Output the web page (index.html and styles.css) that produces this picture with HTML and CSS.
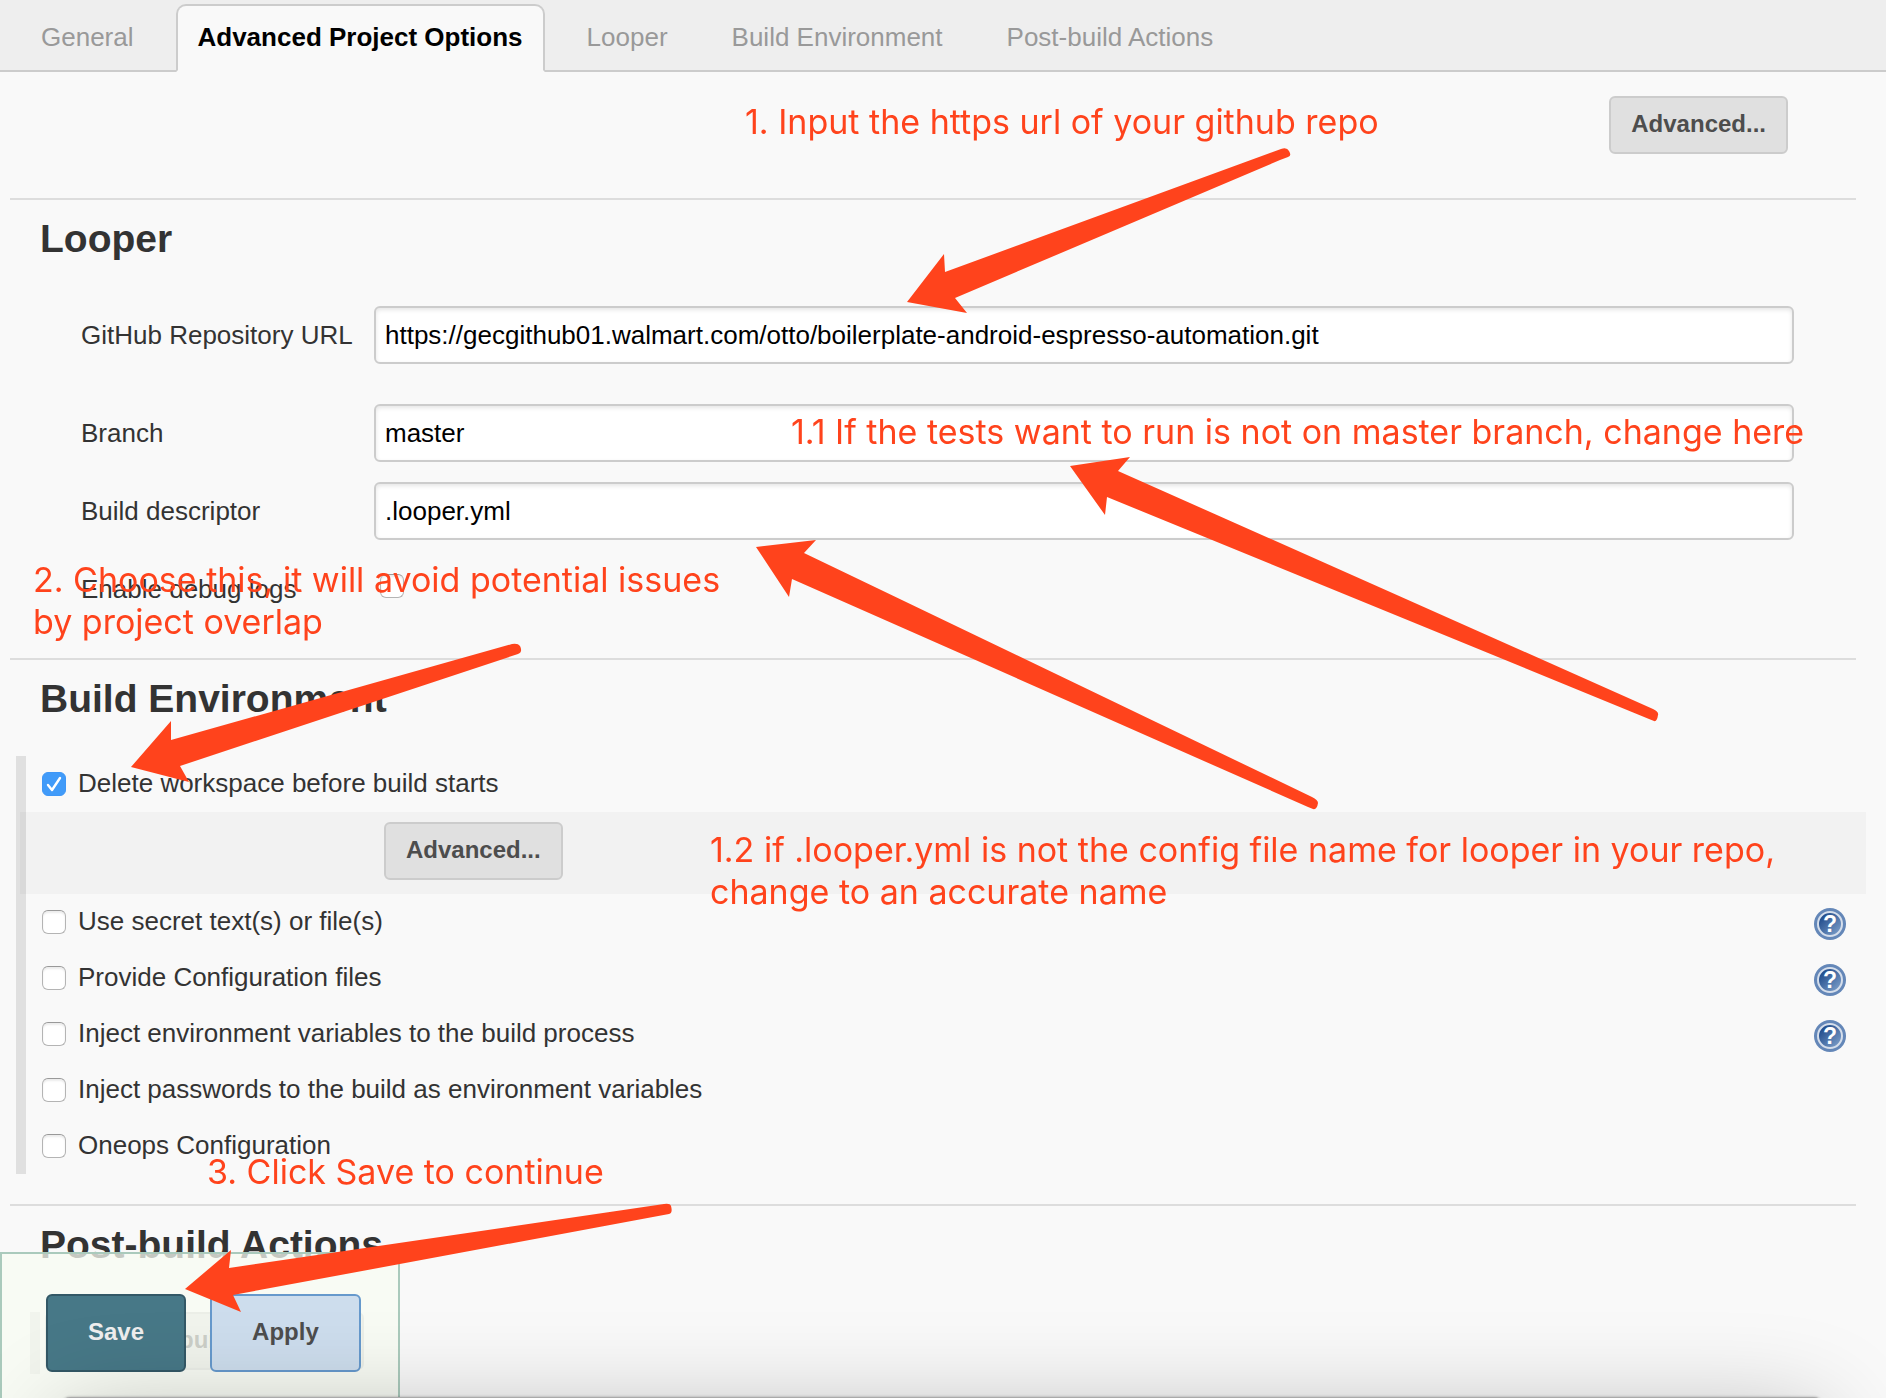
FILE: index.html
```html
<!DOCTYPE html>
<html lang="en">
<head>
<meta charset="utf-8">
<meta name="viewport" content="width=device-width, initial-scale=1">
<title>Project Configuration</title>
<link rel="stylesheet" href="styles.css">
</head>
<body>
<svg class="defs" width="0" height="0" aria-hidden="true">
  <defs>
    <linearGradient id="help-fill" x1="0" y1="0" x2="1" y2="1">
      <stop offset="0.2" stop-color="#25508f"/>
      <stop offset="1" stop-color="#88a8d0"/>
    </linearGradient>
    <symbol id="help" viewBox="0 0 32 32">
      <circle cx="16" cy="16" r="16" fill="#6487b8"/>
      <circle cx="16" cy="16" r="12" fill="url(#help-fill)" stroke="#d5deeb" stroke-width="2"/>
      <text x="16" y="24" text-anchor="middle" class="help-mark">?</text>
    </symbol>
  </defs>
</svg>
<div class="page">
  <nav class="tabs">
    <a class="tab" href="#general">General</a>
    <a class="tab tab-active" href="#advanced">Advanced Project Options</a>
    <a class="tab" href="#looper">Looper</a>
    <a class="tab" href="#environment">Build Environment</a>
    <a class="tab" href="#post-build">Post-build Actions</a>
  </nav>

  <main class="config">
    <div class="advanced-row" id="advanced">
      <button class="btn" type="button">Advanced...</button>
    </div>

    <section class="section" id="looper">
      <h2 class="heading">Looper</h2>
      <div class="form">
        <div class="field field-spaced">
          <label for="repo">GitHub Repository URL</label>
          <input class="text-input" id="repo" type="text" value="https://gecgithub01.walmart.com/otto/boilerplate-android-espresso-automation.git">
        </div>
        <div class="field">
          <label for="branch">Branch</label>
          <input class="text-input" id="branch" type="text" value="master">
        </div>
        <div class="field">
          <label for="descriptor">Build descriptor</label>
          <input class="text-input" id="descriptor" type="text" value=".looper.yml">
        </div>
        <div class="field">
          <label for="debug">Enable debug logs</label>
          <input class="check check-field" id="debug" type="checkbox">
        </div>
      </div>
    </section>

    <section class="section" id="environment">
      <h2 class="heading">Build Environment</h2>
      <ul class="options">
        <li class="option"><input class="check" id="clean" type="checkbox" checked><label for="clean">Delete workspace before build starts</label></li>
        <li class="option-detail"><button class="btn" type="button">Advanced...</button></li>
        <li class="option"><input class="check" id="secret" type="checkbox"><label for="secret">Use secret text(s) or file(s)</label><button class="help" type="button" aria-label="Help"><svg width="32" height="32"><use href="#help"/></svg></button></li>
        <li class="option"><input class="check" id="files" type="checkbox"><label for="files">Provide Configuration files</label><button class="help" type="button" aria-label="Help"><svg width="32" height="32"><use href="#help"/></svg></button></li>
        <li class="option"><input class="check" id="variables" type="checkbox"><label for="variables">Inject environment variables to the build process</label><button class="help" type="button" aria-label="Help"><svg width="32" height="32"><use href="#help"/></svg></button></li>
        <li class="option"><input class="check" id="passwords" type="checkbox"><label for="passwords">Inject passwords to the build as environment variables</label></li>
        <li class="option"><input class="check" id="oneops" type="checkbox"><label for="oneops">Oneops Configuration</label></li>
      </ul>
    </section>

    <section class="section" id="post-build">
      <h2 class="heading">Post-build Actions</h2>
      <div class="add-step">
        <button class="btn btn-menu" type="button">Add post-build action</button>
      </div>
    </section>
  </main>

  <div class="actions">
    <button class="action action-save" type="submit">Save</button>
    <button class="action action-apply" type="button">Apply</button>
  </div>
  <div class="dock-shadow"></div>

  <div class="notes">
    <svg class="arrows" width="1886" height="1398" viewBox="0 0 1886 1398" aria-hidden="true">
      <path d="M907 302L944 254L945 272L1281 149Q1287 147 1289 151Q1292 156 1288 157L1280 160L955 298L967 313Z"/>
      <path d="M131 767L171 721L171 740L512 644Q518 643 520 646Q523 652 518 654L180 766L189 782Z"/>
      <path d="M756 547L816 540L804 553L1312 797Q1318 800 1318 803Q1317 810 1313 809L1308 807L792 579L789 597Z"/>
      <path d="M1070 466L1130 457L1118 471L1653 709Q1659 712 1658 715Q1657 722 1654 721L1649 719L1107 497L1105 515Z"/>
      <path d="M185 1289L231 1250L229 1268L664 1204Q670 1203 671 1206Q673 1213 669 1214L233 1295L241 1312Z"/>
    </svg>
    <p class="note note-url">1. Input the https url of your github repo</p>
    <p class="note note-branch">1.1 If the tests want to run is not on master branch, change here</p>
    <p class="note note-file">1.2 if .looper.yml is not the config file name for looper in your repo,<br>change to an accurate name</p>
    <p class="note note-clean">2. Choose this, it will avoid potential issues<br>by project overlap</p>
    <p class="note note-save">3. Click Save to continue</p>
  </div>
</div>
</body>
</html>
```
FILE: styles.css
```css
* {
  box-sizing: border-box;
}

body {
  margin: 0;
  background: #f9f9f9;
  color: #333;
  font: 26px/30px "Liberation Sans", Arial, sans-serif;
}

button,
input {
  margin: 0;
  font-family: inherit;
}

.defs {
  position: absolute;
}

.page {
  position: relative;
  min-height: 100vh;
  overflow: hidden;
}

/* Tabs */
.tabs {
  display: flex;
  align-items: flex-end;
  gap: 20px;
  height: 72px;
  padding-left: 19px;
  background: #eee;
  box-shadow: inset 0 -2px #ccc;
}

.tab {
  height: 68px;
  padding: 16px 20px;
  border: 2px solid transparent;
  color: #999;
  text-decoration: none;
  white-space: nowrap;
}

.tab-active {
  border-color: #ccc;
  border-bottom-color: #f9f9f9;
  border-radius: 10px 10px 0 0;
  background: #f9f9f9;
  color: #000;
  font-weight: bold;
}

/* Sections */
.config {
  padding: 0 30px 0 10px;
}

.advanced-row {
  display: flex;
  justify-content: flex-end;
  padding: 24px 68px 44px 0;
}

.section {
  border-top: 2px solid #ddd;
  padding-top: 16px;
}

.heading {
  margin: 0 0 34px 30px;
  font-size: 39px;
  line-height: 46px;
}

.btn {
  height: 58px;
  padding: 0 20px 2px;
  border: 2px solid #ccc;
  border-radius: 6px;
  background: #e0e0e0;
  color: #4d4d4d;
  font-size: 24px;
  font-weight: bold;
}

.form {
  display: flex;
  flex-direction: column;
  gap: 20px;
  padding: 10px 62px 40px 71px;
}

.field {
  display: grid;
  grid-template-columns: 293px 1fr;
  align-items: center;
  min-height: 58px;
}

.field-spaced {
  margin-bottom: 20px;
}

.text-input {
  width: 100%;
  height: 58px;
  padding: 0 9px;
  border: 2px solid #ccc;
  border-radius: 6px;
  background: #fff;
  box-shadow: inset 0 2px 4px rgba(0, 0, 0, 0.1);
  color: #000;
  font-size: 26px;
}

.check {
  appearance: none;
  flex: none;
  width: 24px;
  height: 24px;
  border: 1px solid #b4b4b4;
  border-top-color: #999;
  border-radius: 6px;
  background: #fff;
  box-shadow: inset 0 2px 2px rgba(0, 0, 0, 0.08);
}

.check:checked {
  border-color: #3f97f7;
  background: #419bf9 url("data:image/svg+xml,%3Csvg xmlns='http://www.w3.org/2000/svg' viewBox='0 0 22 22'%3E%3Cpath d='M5 12l4 5 8-12' fill='none' stroke='white' stroke-width='2.4' stroke-linecap='round' stroke-linejoin='round'/%3E%3C/svg%3E") center / 22px no-repeat;
  box-shadow: none;
}

.check-field {
  margin: 0 0 6px 6px;
}

/* Build environment options */
.options {
  margin: 0 -10px 30px 6px;
  padding: 0;
  border-left: 10px solid #e0e0e0;
  list-style: none;
}

.option {
  display: flex;
  align-items: center;
  gap: 12px;
  height: 56px;
  padding: 0 20px 0 16px;
}

.option label {
  padding-bottom: 2px;
}

.option-detail {
  margin-left: -6px;
  padding: 10px 0 14px 364px;
  background: rgba(0, 0, 0, 0.027);
}

.option-detail .btn {
  display: block;
}

.help {
  display: block;
  height: 36px;
  margin-left: auto;
  padding: 4px 0 0;
  border: 0;
  background: none;
}

.help svg {
  display: block;
}

.help-mark {
  fill: #fff;
  font: bold 23px "Liberation Sans", Arial, sans-serif;
}

.add-step {
  margin: 44px 0 24px 20px;
  padding: 0 0 4px 5px;
  border-left: 10px solid #e0e0e0;
}

.btn-menu {
  display: block;
  padding-right: 48px;
}

/* Save bar, pinned to the bottom of the window */
.actions {
  position: fixed;
  bottom: 0;
  left: 0;
  display: flex;
  gap: 24px;
  padding: 40px 37px 26px 44px;
  border: 2px solid #aacabc;
  border-bottom: 0;
  border-radius: 0 10px 0 0;
  background: rgba(247, 251, 242, 0.75);
}

.action {
  height: 78px;
  padding: 0 40px 2px;
  border: 2px solid #335866;
  border-radius: 6px;
  background: #477887;
  color: #eee;
  font-size: 24px;
  font-weight: bold;
}

.action-apply {
  border-color: #6699cc;
  background: #cddded;
  color: #4d4d4d;
}

.dock-shadow {
  position: fixed;
  right: 64px;
  bottom: -399px;
  left: 62px;
  height: 400px;
  border-radius: 8px;
  background: #aaa;
  box-shadow: 0 0 3px rgba(0, 0, 0, 0.3), 0 20px 100px rgba(0, 0, 0, 0.28);
  pointer-events: none;
}

/* Annotations drawn over the form */
.notes {
  position: absolute;
  inset: 0;
  pointer-events: none;
}

.arrows {
  position: absolute;
  top: 0;
  left: 0;
  fill: #ff431c;
}

.note {
  position: absolute;
  margin: 0;
  color: #ff431c;
  font: 34px/42px Inter, "Open Sans", sans-serif;
  white-space: nowrap;
}

.note-url {
  top: 101px;
  left: 745px;
}

.note-branch {
  top: 411px;
  left: 791px;
}

.note-file {
  top: 829px;
  left: 710px;
}

.note-clean {
  top: 559px;
  left: 33px;
}

.note-save {
  top: 1151px;
  left: 207px;
}
```
